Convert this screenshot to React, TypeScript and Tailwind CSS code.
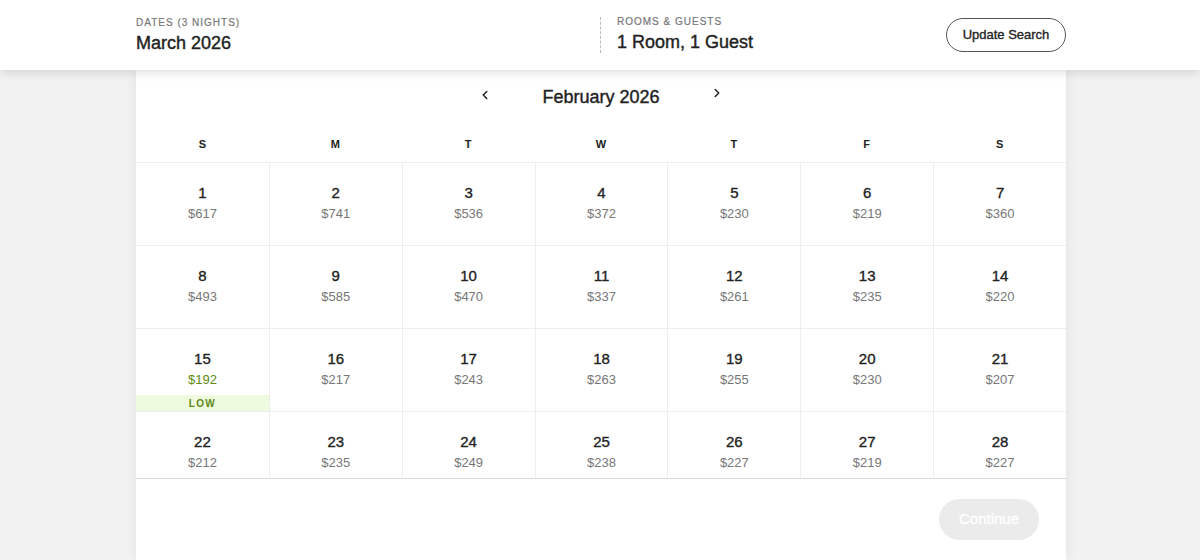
import { ChevronLeft, ChevronRight } from 'lucide-react';

const prices = [
  617, 741, 536, 372, 230, 219, 360,
  493, 585, 470, 337, 261, 235, 220,
  192, 217, 243, 263, 255, 230, 207,
  212, 235, 249, 238, 227, 219, 227,
];

const days = ['S', 'M', 'T', 'W', 'T', 'F', 'S'];

export default function App() {
  return (
    <div className="min-h-[560px] h-[560px] overflow-hidden bg-[#f2f2f2] font-['Liberation_Sans',Arial,sans-serif] text-[#222]">
      {/* search summary bar */}
      <header className="relative z-10 h-[70px] bg-white shadow-[0_2px_10px_rgba(0,0,0,0.14)]">
        <div className="ml-[136px] flex h-full w-[930px] items-center">
          <div className="w-[464px]">
            <div className="text-[10px] uppercase tracking-[0.1em] text-[#777] [-webkit-text-stroke:0.2px]">Dates (3 Nights)</div>
            <div className="mt-[1px] text-[18px] leading-[24px] [-webkit-text-stroke:0.4px]">March 2026</div>
          </div>
          <div className="flex h-[36px] items-center border-l border-dashed border-[#bbb] pl-[16px]">
            <div>
              <div className="-mt-[2px] text-[10px] uppercase tracking-[0.1em] text-[#777] [-webkit-text-stroke:0.2px]">Rooms &amp; Guests</div>
              <div className="mt-[1px] text-[18px] leading-[24px] [-webkit-text-stroke:0.4px]">1 Room, 1 Guest</div>
            </div>
          </div>
          <button className="ml-auto h-[34px] w-[120px] rounded-full border border-[#555] text-[13px] text-[#222] [-webkit-text-stroke:0.35px]">
            Update Search
          </button>
        </div>
      </header>

      {/* calendar card */}
      <div className="ml-[136px] h-[490px] w-[930px] bg-white shadow-[0_0_12px_rgba(0,0,0,0.08)]">
        <div className="flex h-[57px] items-start justify-center pt-[13px]">
          <ChevronLeft size={14} strokeWidth={2.6} className="mt-[5px] text-[#222]" />
          <div className="mx-[50px] text-[18px] leading-[28px] [-webkit-text-stroke:0.4px]">February 2026</div>
          <ChevronRight size={14} strokeWidth={2.6} className="mt-[3px] text-[#222]" />
        </div>

        <div className="grid h-[35px] grid-cols-7 items-center">
          {days.map((d, i) => (
            <div key={i} className="text-center text-[11px] font-bold">
              {d}
            </div>
          ))}
        </div>

        <div className="h-[317px] overflow-hidden border-b border-[#d9d9d9]">
          <div className="grid grid-cols-7">
            {prices.map((p, i) => {
              const low = i === 14;
              return (
                <div
                  key={i}
                  className={`flex h-[83px] flex-col items-center border-t border-[#eee] pt-[20px] ${i % 7 === 0 ? '' : 'border-l'}`}
                >
                  <div className="text-[15px] leading-[20px] [-webkit-text-stroke:0.35px]">{i + 1}</div>
                  <div className={`mt-[2px] text-[13px] leading-[18px] ${low ? 'text-[#5c8a12]' : 'text-[#777]'}`}>${p}</div>
                  {low && (
                    <div className="mt-auto flex h-[16px] w-full items-center justify-center bg-[#effbdf] text-[10px] font-bold tracking-[0.14em] text-[#5c8a12]">
                      LOW
                    </div>
                  )}
                </div>
              );
            })}
          </div>
        </div>

        <div className="flex justify-end pr-[27px] pt-[20px]">
          <button className="h-[41px] w-[100px] rounded-full bg-[#ebebeb] text-[15px] text-white [-webkit-text-stroke:0.3px]" disabled>
            Continue
          </button>
        </div>
      </div>
    </div>
  );
}
